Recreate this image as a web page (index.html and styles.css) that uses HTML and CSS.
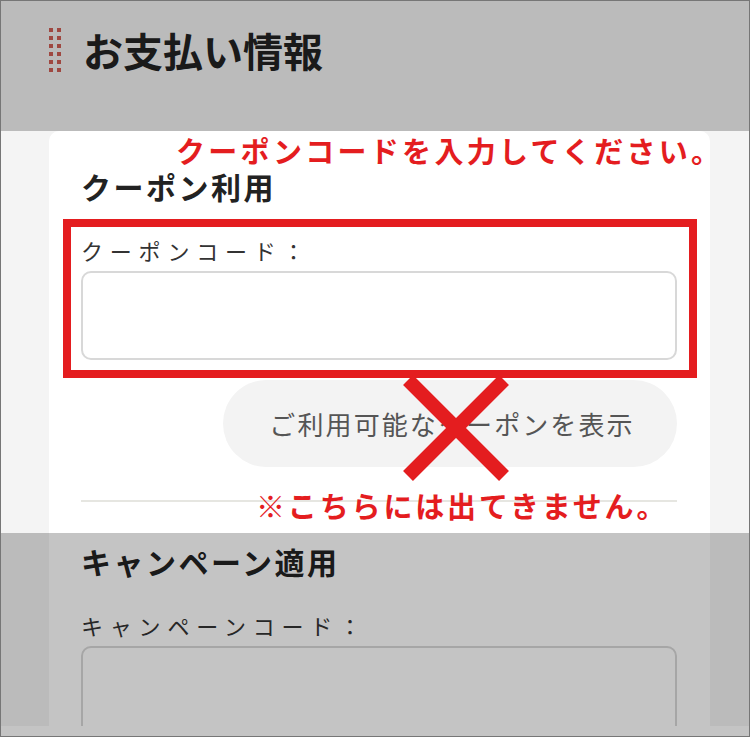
FILE: index.html
```html
<!DOCTYPE html>
<html lang="ja">
<head>
<meta charset="utf-8">
<title>お支払い情報</title>
<link rel="stylesheet" href="styles.css">
</head>
<body>
<div class="frame">
  <div class="page">
    <header class="page-head">
      <div class="dots">
        <span></span><span></span><span></span><span></span>
        <span></span><span></span><span></span><span></span>
        <span></span><span></span><span></span><span></span>
      </div>
      <h1 class="page-title">お支払い情報</h1>
    </header>
    <section class="card">
      <h2 class="sec-title">クーポン利用</h2>
      <label class="field-label">クーポンコード：</label>
      <div class="field"></div>
      <div class="btn-row">
        <button class="btn-list" type="button">ご利用可能なクーポンを表示</button>
      </div>
      <hr class="divider">
      <h2 class="sec-title sec-title-2">キャンペーン適用</h2>
      <label class="field-label">キャンペーンコード：</label>
      <div class="field"></div>
    </section>
  </div>

  <div class="shade shade-top"></div>
  <div class="shade shade-bottom"></div>

  <p class="note note-top">クーポンコードを入力してください。</p>
  <div class="mark-box"></div>
  <svg class="mark-x" width="112" height="112" viewBox="0 0 112 112">
    <line x1="8" y1="8" x2="104" y2="104" stroke="#e41d1f" stroke-width="14"/>
    <line x1="104" y1="8" x2="8" y2="104" stroke="#e41d1f" stroke-width="14"/>
  </svg>
  <p class="note note-bottom">※こちらには出てきません。</p>
</div>
</body>
</html>
```

FILE: styles.css
```css
html, body {
  margin: 0;
  padding: 0;
  background: #fff;
}

.frame {
  position: relative;
  width: 750px;
  height: 737px;
  box-sizing: border-box;
  border: 1px solid #767676;
  background: #fff;
  overflow: hidden;
  font-family: "Noto Sans CJK JP", "Noto Sans", sans-serif;
}

.page {
  height: 725px;
  background: #f4f4f4;
  overflow: hidden;
}

.page-head {
  height: 130px;
  box-sizing: border-box;
  padding: 27px 0 0 48px;
  display: flex;
  align-items: flex-start;
  gap: 22px;
}

.dots {
  display: grid;
  grid-template-columns: 4px 4px;
  grid-auto-rows: 4px;
  column-gap: 4px;
  row-gap: 4px;
}

.dots span {
  display: block;
  background: #cf5e55;
}

.page-title {
  margin: 0;
  font-size: 40px;
  line-height: 44px;
  font-weight: 700;
  color: #222;
  letter-spacing: 0;
}

.card {
  margin-left: 48px;
  width: 661px;
  box-sizing: border-box;
  background: #fff;
  border-radius: 10px 10px 0 0;
  padding: 34px 33px 0 32px;
  display: flex;
  flex-direction: column;
  min-height: 700px;
}

.sec-title {
  margin: 0;
  font-size: 30px;
  line-height: 42px;
  font-weight: 700;
  letter-spacing: 2.5px;
  color: #222;
}

.sec-title-2 {
  margin-top: 38px;
}

.field-label {
  display: block;
  margin-top: 27px;
  font-size: 22px;
  line-height: 32px;
  letter-spacing: 6.8px;
  color: #333;
}

.field {
  margin-top: 5px;
  height: 89px;
  box-sizing: border-box;
  border: 2px solid #d8d8d8;
  border-radius: 10px;
  background: #fff;
}

.btn-row {
  margin-top: 20px;
  display: flex;
  justify-content: flex-end;
}

.btn-list {
  width: 454px;
  height: 87px;
  border: none;
  border-radius: 44px;
  background: #f3f3f3;
  color: #555;
  font-family: inherit;
  font-size: 26px;
  letter-spacing: 2.1px;
  padding: 0 0 0 4px;
}

.divider {
  margin: 33px 0 0;
  height: 2px;
  border: none;
  background: #e6e6e1;
}

.shade {
  position: absolute;
  left: 0;
  right: 0;
  background: rgba(0, 0, 0, 0.23);
}

.shade-top {
  top: 0;
  height: 130px;
}

.shade-bottom {
  top: 532px;
  bottom: 0;
}

.note {
  position: absolute;
  margin: 0;
  font-size: 29px;
  line-height: 30px;
  font-weight: 700;
  color: #e41d1f;
  white-space: nowrap;
}

.note-top {
  left: 175px;
  top: 134px;
  letter-spacing: 3.3px;
}

.note-bottom {
  left: 255px;
  top: 489px;
  letter-spacing: 2.85px;
}

.mark-box {
  position: absolute;
  left: 62px;
  top: 218px;
  width: 634px;
  height: 159px;
  box-sizing: border-box;
  border: 8px solid #e41d1f;
}

.mark-x {
  position: absolute;
  left: 399px;
  top: 371px;
}
```
